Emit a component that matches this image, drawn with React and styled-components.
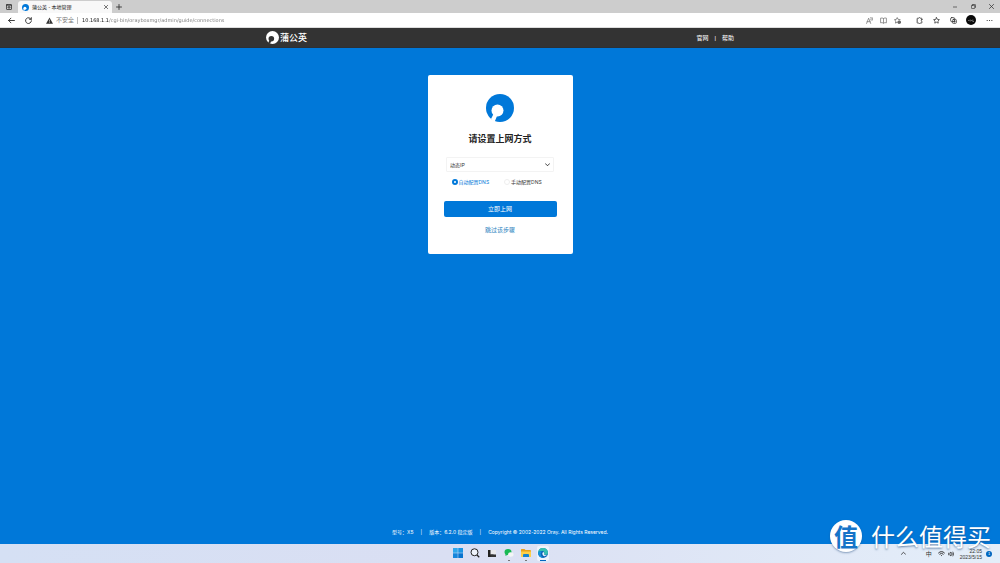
import React, { useState } from 'react'
import styled, { createGlobalStyle } from 'styled-components'

const GlobalStyle = createGlobalStyle`
  * {
    box-sizing: border-box;
  }
  body {
    margin: 0;
    font-family: 'Liberation Sans', 'Noto Sans CJK SC', sans-serif;
    font-size: 6px;
    line-height: 8px;
  }
  button,
  input,
  select {
    margin: 0;
    padding: 0;
    border: 0;
    background: none;
    font: inherit;
    color: inherit;
  }
  svg {
    display: block;
    flex: none;
  }
`

const Screen = styled.div`
  position: relative;
  display: flex;
  flex-direction: column;
  min-height: 100vh;
`

const TabStrip = styled.div`
  display: flex;
  align-items: center;
  height: 13px;
  padding: 0 5px 0 6px;
  background-color: #cdcdcd;
`

const Tab = styled.div`
  display: flex;
  align-items: center;
  align-self: flex-end;
  gap: 3px;
  width: 94px;
  height: 12px;
  margin: 0 3px 0 6px;
  padding: 0 4px;
  border-radius: 3px 3px 0 0;
  background-color: #f8f8f8;
  font-size: 5px;
  color: #222;
`

const TabTitle = styled.span`
  flex: 1;
  white-space: nowrap;
`

const IconButton = styled.button`
  display: flex;
  align-items: center;
  justify-content: center;
  width: ${props => props.$width || 8}px;
  height: 8px;
  color: ${props => props.$color || '#333'};
  cursor: pointer;
`

const WindowControls = styled.div`
  display: flex;
  gap: 10px;
  margin-left: auto;
`

const AddressBar = styled.div`
  display: flex;
  align-items: center;
  height: 15px;
  padding: 0 7px;
  background-color: #fff;
  border-bottom: 1px solid #ddd;
`

const NavButtons = styled.div`
  display: flex;
  gap: 9px;
  margin-right: 14px;
`

const Security = styled.span`
  display: flex;
  align-items: center;
  gap: 3px;
  padding-right: 3px;
  color: #777;
`

const Bar = styled.span`
  width: 1px;
  height: 7px;
  background-color: #bbb;
`

/* host is dark, path is light */
const UrlInput = styled.input`
  flex: 1;
  min-width: 0;
  height: 10px;
  margin-left: 4px;
  font-family: 'DejaVu Sans', sans-serif;
  font-size: 5px;
  background: linear-gradient(90deg, #111 27px, #777 27px);
  -webkit-background-clip: text;
  background-clip: text;
  color: transparent;
  outline: none;
`

const Tools = styled.div`
  display: flex;
  align-items: center;
  gap: 14px;
`

const ToolGroup = styled.div`
  display: flex;
  align-items: center;
  gap: ${props => props.$gap}px;
`

const Avatar = styled.button`
  width: 10px;
  height: 10px;
  border-radius: 50%;
  background-color: #0a0a0a;
  display: flex;
  align-items: center;
  justify-content: center;
`

const SiteHeader = styled.header`
  display: flex;
  justify-content: center;
  height: 20px;
  background-color: #333;
  border-bottom: 1px solid #2b3037;
`

const HeaderInner = styled.div`
  display: flex;
  align-items: center;
  justify-content: space-between;
  width: 100%;
  max-width: 468px;
`

const Brand = styled.a`
  display: flex;
  align-items: center;
  gap: 1px;
  font-size: 9px;
  line-height: 12px;
  font-weight: 500;
  color: #fff;
  text-decoration: none;
`

const HeaderLinks = styled.nav`
  display: flex;
  gap: 6px;
  color: #fff;
  a {
    color: #fff;
    text-decoration: none;
  }
`

const Main = styled.main`
  flex: 1;
  display: flex;
  flex-direction: column;
  align-items: center;
  justify-content: space-between;
  padding: 27px 0 8px;
  background-color: #0078d9;
`

const Card = styled.form`
  display: flex;
  flex-direction: column;
  align-items: center;
  width: 145px;
  padding: 19px 16px;
  border-radius: 2px;
  background-color: #fff;
`

const Title = styled.h1`
  margin: 11px 0;
  font-size: 9px;
  line-height: 13px;
  font-weight: 700;
  color: #222;
`

const SelectWrap = styled.div`
  display: flex;
  align-items: center;
  width: 108px;
  height: 15px;
  padding-right: 3px;
  border: 1px solid #f3f3f3;
  border-radius: 1px;
`

const Select = styled.select`
  flex: 1;
  appearance: none;
  height: 12px;
  padding-left: 3px;
  font-size: 5px;
  color: #333;
  outline: none;
`

const RadioRow = styled.div`
  display: flex;
  align-self: flex-start;
  gap: 15px;
  margin: 6px 0 15px;
  padding-left: 8px;
`

const RadioLabel = styled.label`
  display: flex;
  align-items: center;
  gap: 1px;
  font-family: Inter, 'Noto Sans CJK SC', sans-serif;
  font-size: 5px;
  color: ${props => (props.$checked ? '#0078d9' : '#333')};
`

const Radio = styled.input`
  appearance: none;
  width: 6px;
  height: 6px;
  border: 1px solid #eee;
  border-radius: 50%;
  &:checked {
    border: 2px solid #0078d9;
  }
`

const SubmitButton = styled.button`
  width: 100%;
  height: 16px;
  border-radius: 2px;
  background-color: #0078d9;
  color: #fff;
  cursor: pointer;
`

const SkipLink = styled.a`
  margin: 9px 0 1px;
  color: #2a83c0;
  text-decoration: none;
`

const SiteFooter = styled.footer`
  display: flex;
  gap: 7px;
  font-family: Inter, 'Noto Sans CJK SC', sans-serif;
  font-size: 5px;
  color: #fff;
`

const Taskbar = styled.footer`
  display: grid;
  grid-template-columns: 1fr auto 1fr;
  align-items: center;
  height: 19px;
  padding: 0 8px;
  background: linear-gradient(90deg, #d5e0f4, #dadff3 45%, #e4eef9);
`

const Apps = styled.div`
  grid-column: 2;
  display: flex;
  gap: 5px;
`

const AppButton = styled.button`
  display: flex;
  flex-direction: column;
  align-items: center;
  justify-content: space-between;
  width: 12px;
  height: 15px;
  padding-top: 2px;
  border-radius: 2px;
  background-color: ${props => (props.$active ? '#eef3fc' : 'transparent')};
`

const Indicator = styled.span`
  width: ${props => (props.$active ? 6 : 2)}px;
  height: 1px;
  background-color: ${props => (props.$active ? '#0067c0' : '#777')};
`

const Tray = styled.div`
  display: flex;
  align-items: center;
  justify-content: flex-end;
  gap: 3px;
  color: #333;
`

const InputMode = styled.span`
  margin: 0 3px 0 15px;
`

const Clock = styled.div`
  margin: 0 1px 0 3px;
  font-size: 5px;
  line-height: 6px;
  text-align: right;
`

const Badge = styled.span`
  width: 6px;
  height: 6px;
  border-radius: 50%;
  background-color: #0067c0;
  color: #fff;
  font-size: 4px;
  line-height: 6px;
  text-align: center;
`

const Watermark = styled.div`
  position: absolute;
  right: 9px;
  bottom: 11px;
  display: flex;
  align-items: center;
  gap: 9px;
  font-family: 'Noto Sans CJK SC', sans-serif;
  font-size: 24px;
  line-height: 32px;
  color: #fff;
  text-shadow: 0 1px 2px rgba(40, 80, 130, 0.7);
  pointer-events: none;
`

const WatermarkSeal = styled.span`
  width: 32px;
  height: 32px;
  border-radius: 50%;
  background-color: #fff;
  box-shadow: 0 1px 2px rgba(40, 80, 130, 0.5);
  color: #1674c8;
  font-size: 24px;
  line-height: 31px;
  font-weight: 700;
  text-align: center;
  text-shadow: none;
`

function Logo({ size, color, hole }) {
  return (
    <svg width={size} height={size} viewBox="0 0 28 28" aria-hidden="true">
      <circle cx="14" cy="14" r="14" fill={color} />
      <path d="M7.500 20L5 25L8.500 28L11.500 21Z" fill={hole} />
      <circle cx="11.500" cy="16.500" r="6" fill={hole} />
    </svg>
  )
}

function LineIcon({ size = 7, width = 1.3, viewBox = '0 0 12 12', children }) {
  return (
    <svg
      width={size}
      height={size}
      viewBox={viewBox}
      fill="none"
      stroke="currentColor"
      strokeWidth={width}
      strokeLinecap="round"
      strokeLinejoin="round"
      aria-hidden="true"
    >
      {children}
    </svg>
  )
}

function BrowserChrome() {
  const [url, setUrl] = useState(
    '10.168.1.1/cgi-bin/orayboxmgr/admin/guide/connections'
  )
  return (
    <React.Fragment>
      <TabStrip>
        <IconButton $width={6} aria-label="Tab actions">
          <LineIcon size={6} width={1.6}>
            <rect x="1" y="1" width="10" height="10" rx="1" />
            <path d="M1 2.500H11M5 5.500H8V8H5Z" />
          </LineIcon>
        </IconButton>
        <Tab>
          <Logo size={7} color="#0078d9" hole="#fff" />
          <TabTitle>蒲公英 - 本地管理</TabTitle>
          <IconButton $width={5} aria-label="Close tab">
            <LineIcon size={4} width={2}>
              <path d="M1 1L11 11M11 1L1 11" />
            </LineIcon>
          </IconButton>
        </Tab>
        <IconButton $width={7} aria-label="New tab">
          <LineIcon size={6} width={1.8}>
            <path d="M6 1V11M1 6H11" />
          </LineIcon>
        </IconButton>
        <WindowControls>
          <IconButton aria-label="Minimize">
            <LineIcon size={4} width={2}>
              <path d="M1 6H11" />
            </LineIcon>
          </IconButton>
          <IconButton aria-label="Restore">
            <LineIcon size={5} width={1.8}>
              <rect x="1" y="3" width="8" height="8" rx="2" />
              <path d="M4 1H9Q11 1 11 3V8" />
            </LineIcon>
          </IconButton>
          <IconButton aria-label="Close">
            <LineIcon size={5} width={1.8}>
              <path d="M1 1L11 11M11 1L1 11" />
            </LineIcon>
          </IconButton>
        </WindowControls>
      </TabStrip>
      <AddressBar>
        <NavButtons>
          <IconButton aria-label="Back">
            <LineIcon width={1.6}>
              <path d="M11 6H1M5 2L1 6L5 10" />
            </LineIcon>
          </IconButton>
          <IconButton aria-label="Refresh">
            <LineIcon width={1.6}>
              <path d="M10.500 4A5 5 0 1 0 11 6.500M10.800 1V4H7.800" />
            </LineIcon>
          </IconButton>
        </NavButtons>
        <Security>
          <svg width="7" height="7" viewBox="0 0 12 12" aria-hidden="true">
            <path d="M6 1L12 11.500H0Z" fill="#333" />
            <path d="M6 4.500V8M6 9V10.200" stroke="#fff" />
          </svg>
          不安全
        </Security>
        <Bar />
        <UrlInput
          aria-label="Address"
          value={url}
          onChange={e => setUrl(e.target.value)}
        />
        <Tools>
          <ToolGroup $gap={6}>
            <IconButton $color="#777" aria-label="Read aloud">
              <LineIcon>
                <path d="M1 11L4.500 2L8 11M2 8H7M8 1Q10 2.500 8.500 5M10 0Q13 3 10.500 6" />
              </LineIcon>
            </IconButton>
            <IconButton $color="#777" aria-label="Immersive reader">
              <LineIcon>
                <path d="M6 2.500Q3.500 1 1 2V10Q3.500 9 6 10.500Q8.500 9 11 10V2Q8.500 1 6 2.500V10.500" />
              </LineIcon>
            </IconButton>
            <IconButton $color="#666" aria-label="Add to favorites">
              <LineIcon>
                <path d="M5.500 9L2.500 10.500L3 7L0.800 4.500L4 4L5.500 1L7 4L10.500 4.500" />
                <circle cx="9" cy="9" r="2.500" fill="currentColor" />
              </LineIcon>
            </IconButton>
          </ToolGroup>
          <ToolGroup $gap={9}>
            <IconButton aria-label="Extensions">
              <LineIcon width={1.5}>
                <path d="M10 4V3Q10 2 9 2H7.500Q6 0 4.500 2H3Q2 2 2 3V9.500Q2 10.500 3 10.500H4.500Q6 12 7.500 10.500H9Q10 10.500 10 9.500V8Q8 6 10 4Z" />
              </LineIcon>
            </IconButton>
            <IconButton aria-label="Favorites">
              <LineIcon>
                <path d="M6 1L7.500 4L11 4.500L8.500 7L9 10.500L6 9L3 10.500L3.500 7L1 4.500L4.500 4Z" />
              </LineIcon>
            </IconButton>
            <IconButton aria-label="Collections">
              <LineIcon>
                <rect x="1" y="1" width="7" height="7" rx="2" />
                <rect x="4" y="4" width="7" height="7" rx="2" />
                <path d="M7.500 6V9M6 7.500H9" />
              </LineIcon>
            </IconButton>
            <Avatar aria-label="Profile">
              <svg width="6" height="3" viewBox="0 0 12 6">
                <path
                  d="M0 3H3M4.500 1V5M6 3H8M9.500 1V5H12"
                  stroke="#ccc"
                  fill="none"
                />
              </svg>
            </Avatar>
            <IconButton aria-label="Settings and more">
              <LineIcon width={2}>
                <path d="M2 6H2.100M6 6H6.100M10 6H10.100" />
              </LineIcon>
            </IconButton>
          </ToolGroup>
        </Tools>
      </AddressBar>
    </React.Fragment>
  )
}

function ConnectionForm() {
  const [dns, setDns] = useState('auto')
  return (
    <Card onSubmit={e => e.preventDefault()}>
      <Logo size={28} color="#0078d9" hole="#fff" />
      <Title>请设置上网方式</Title>
      <SelectWrap>
        <Select aria-label="上网方式" defaultValue="dhcp">
          <option value="dhcp">动态IP</option>
        </Select>
        <LineIcon size={5} width={1.8}>
          <path d="M1 4L6 9L11 4" />
        </LineIcon>
      </SelectWrap>
      <RadioRow>
        <RadioLabel $checked={dns === 'auto'}>
          <Radio
            type="radio"
            name="dns"
            checked={dns === 'auto'}
            onChange={() => setDns('auto')}
          />
          自动配置DNS
        </RadioLabel>
        <RadioLabel $checked={dns === 'manual'}>
          <Radio
            type="radio"
            name="dns"
            checked={dns === 'manual'}
            onChange={() => setDns('manual')}
          />
          手动配置DNS
        </RadioLabel>
      </RadioRow>
      <SubmitButton type="submit">立即上网</SubmitButton>
      <SkipLink href="#skip">跳过该步骤</SkipLink>
    </Card>
  )
}

function WindowsTaskbar() {
  return (
    <Taskbar>
      <Apps>
        <AppButton aria-label="Start">
          <svg width="10" height="10" viewBox="0 0 20 20">
            <path d="M0 0H9.500V9.500H0Z" fill="#2fa8ed" />
            <path d="M10.500 0H20V9.500H10.500Z" fill="#1a94e4" />
            <path d="M0 10.500H9.500V20H0Z" fill="#1686dc" />
            <path d="M10.500 10.500H20V20H10.500Z" fill="#0874cf" />
          </svg>
        </AppButton>
        <AppButton aria-label="Search">
          <svg width="10" height="10" viewBox="0 0 20 20">
            <circle
              cx="9"
              cy="8.500"
              r="7"
              fill="#eef3fb"
              stroke="#222"
              strokeWidth="2"
            />
            <path d="M14 14L18.500 18.500" stroke="#222" strokeWidth="2.500" />
          </svg>
        </AppButton>
        <AppButton aria-label="Task view">
          <svg width="10" height="10" viewBox="0 0 20 20">
            <path d="M2 4H13V18H2Z" fill="#222" />
            <path d="M7 4H18V13H7Z" fill="#e9e9ec" />
            <path d="M7 13H18V18H7Z" fill="#333" />
          </svg>
        </AppButton>
        <AppButton aria-label="WeChat">
          <svg width="10" height="10" viewBox="0 0 20 20">
            <ellipse cx="8" cy="8" rx="7" ry="6" fill="#19b955" />
            <path d="M3 11L3 16L8 13Z" fill="#19b955" />
            <ellipse cx="13.500" cy="13" rx="5.500" ry="4.500" fill="#f2f5f5" />
          </svg>
          <Indicator />
        </AppButton>
        <AppButton aria-label="File Explorer">
          <svg width="10" height="10" viewBox="0 0 20 20">
            <path d="M0 3Q0 2 1 2H7L9 4H18Q20 4 20 6V13H0Z" fill="#e9a21b" />
            <path d="M0 7H20V17Q20 18 19 18H1Q0 18 0 17Z" fill="#ffd04a" />
            <path d="M4 18V14Q4 12 6 12H14Q16 12 16 14V18Z" fill="#1783d1" />
          </svg>
          <Indicator />
        </AppButton>
        <AppButton $active aria-label="Microsoft Edge">
          <svg width="10" height="10" viewBox="0 0 20 20">
            <circle cx="10" cy="10" r="10" fill="#0c62b5" />
            <path
              d="M0 10A10 10 0 0 1 20 9Q20 14 14 14Q11 13 13 10Q12 5 7 6Q2 6 0 10Z"
              fill="#35c1b1"
            />
            <path
              d="M0 10Q3 5 8 7Q4 10 6 15Q8 19 12 20Q2 20 0 10Z"
              fill="#1593dc"
            />
            <path
              d="M10 8Q13 8 12.500 11Q11 13 14 14.500L18 14Q14 18 10 15Q7 11 10 8Z"
              fill="#eef6fc"
            />
          </svg>
          <Indicator $active />
        </AppButton>
      </Apps>
      <Tray>
        <IconButton aria-label="Show hidden icons">
          <LineIcon size={5} width={2}>
            <path d="M1 8L6 3L11 8" />
          </LineIcon>
        </IconButton>
        <InputMode>中</InputMode>
        <LineIcon size={7} width={1.7}>
          <path d="M1 5Q6 0 11 5M3 7Q6 4 9 7M6 9.500H6.100" />
        </LineIcon>
        <LineIcon size={6} width={1.5}>
          <path d="M1 4.500H3L6 2V10L3 7.500H1ZM8 4Q10 6 8 8M10 2Q13 6 10 10" />
        </LineIcon>
        <Clock>
          22:05
          <br />
          2023/5/15
        </Clock>
        <Badge>1</Badge>
      </Tray>
    </Taskbar>
  )
}

export default function App() {
  return (
    <React.Fragment>
      <GlobalStyle />
      <Screen>
        <BrowserChrome />
        <SiteHeader>
          <HeaderInner>
            <Brand href="#home">
              <Logo size={13} color="#fff" hole="#333" />
              蒲公英
            </Brand>
            <HeaderLinks>
              <a href="#site">官网</a>
              <span>|</span>
              <a href="#help">帮助</a>
            </HeaderLinks>
          </HeaderInner>
        </SiteHeader>
        <Main>
          <ConnectionForm />
          <SiteFooter>
            <span>型号：X5</span>
            <span>|</span>
            <span>版本：6.2.0 稳定版</span>
            <span>|</span>
            <span>Copyright © 2002-2022 Oray. All Rights Reserved.</span>
          </SiteFooter>
        </Main>
        <WindowsTaskbar />
        <Watermark>
          <WatermarkSeal>值</WatermarkSeal>
          <span>什么值得买</span>
        </Watermark>
      </Screen>
    </React.Fragment>
  )
}
